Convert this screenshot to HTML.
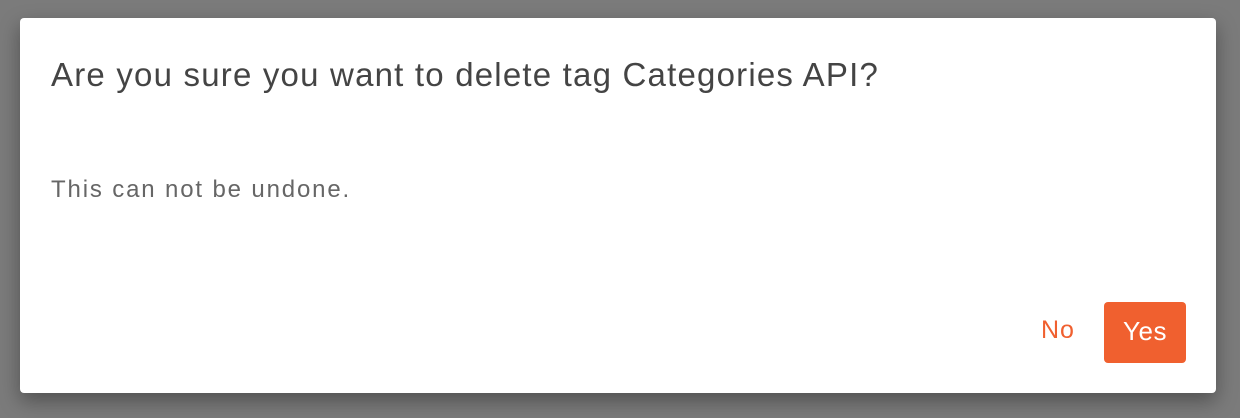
<!DOCTYPE html>
<html><head><style>
body{margin:0;width:1240px;height:418px;background:#7b7b7b;position:relative;overflow:hidden;font-family:"Liberation Sans",sans-serif}
.d{position:absolute;left:20px;top:18px;width:1196px;height:375px;background:#fff;border-radius:4px;box-shadow:0 8px 20px rgba(0,0,0,.35)}
.t{position:absolute;left:31px;top:38px;font-size:33px;color:#444;white-space:nowrap;letter-spacing:1.2px}
.b{position:absolute;left:31px;top:158px;font-size:24px;color:#666;white-space:nowrap;letter-spacing:1.85px}
.no{position:absolute;left:1021px;top:298px;font-size:25px;color:#f06030;letter-spacing:1px}
.yes{position:absolute;left:1084px;top:284px;width:82px;height:61px;background:#f0602f;border-radius:4px;color:#fff;font-size:26px;text-align:center;line-height:58px;letter-spacing:0.5px}
</style></head><body>
<div class="d">
<div class="t">Are you sure you want to delete tag Categories API?</div>
<div class="b">This can not be undone.</div>
<div class="no">No</div>
<div class="yes">Yes</div>
</div>
</body></html>
